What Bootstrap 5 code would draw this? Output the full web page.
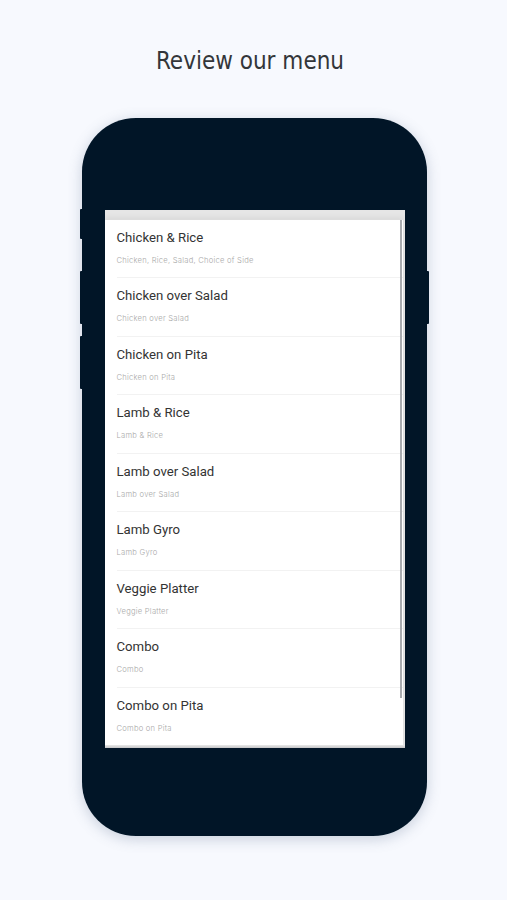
<!DOCTYPE html>
<html lang="en">
<head>
<meta charset="utf-8">
<title>Review our menu</title>
<link rel="stylesheet" href="https://cdn.jsdelivr.net/npm/bootstrap@5.3.0/dist/css/bootstrap.min.css">
<style>
html,body{height:100%}
body{background:#f7f9fe;overflow:hidden;margin:0}
.shot{width:507px;height:900px;padding-top:44px}
.headline{font-family:"DejaVu Sans",sans-serif;font-stretch:condensed;font-size:24px;line-height:34px;color:#33363a;margin:0 0 40px;padding-right:7px;font-weight:400;text-align:center}
.phone{position:relative;width:345px;height:718px;margin-left:82px;background:#011527;border-radius:54px;padding-top:92px;box-shadow:0 3px 14px rgba(90,110,140,.3)}
.side{position:absolute;width:3px;background:#011527;border-radius:1px}
.s1{left:-2px;top:91px;height:30px}
.s2{left:-2px;top:153px;height:53px}
.s3{left:-2px;top:218px;height:53px}
.s4{right:-2px;top:153px;height:53px}
.screen{position:relative;width:300px;height:538px;margin-left:23px;background:#e6e6e6;padding-top:10px;overflow:hidden}
.menu-list{background:#fff;height:526px;margin-right:2px;box-shadow:0 -3px 5px rgba(0,0,0,.05)}
.menu-row{height:58.5px;padding:10px 0 0 0;margin-left:11.5px;border:0;background:transparent;border-radius:0;display:block}
.rule{border-bottom:1px solid #f2f2f2;height:58.5px}
.dish{font-family:Roboto,sans-serif;font-size:13.2px;line-height:16px;color:#333;display:block}
.desc{font-family:Inter,sans-serif;font-size:7.6px;line-height:10px;color:#a8a8a8;display:block;margin-top:10px;letter-spacing:.25px;font-weight:300}
.bar{position:absolute;right:3px;top:10px;width:2px;height:478px;background:#a9abaf}
.base{position:absolute;left:0;right:0;bottom:0;height:3px;background:linear-gradient(#e9e9e9,#c4c4c6)}
</style>
</head>
<body>
<div class="shot">
<h1 class="headline">Review our menu</h1>
<div class="phone">
<span class="side s1"></span><span class="side s2"></span><span class="side s3"></span><span class="side s4"></span>
<div class="screen">
<div class="menu-list list-group list-group-flush">
<div class="list-group-item menu-row rule"><span class="dish">Chicken &amp; Rice</span><span class="desc">Chicken, Rice, Salad, Choice of Side</span></div>
<div class="list-group-item menu-row rule"><span class="dish">Chicken over Salad</span><span class="desc">Chicken over Salad</span></div>
<div class="list-group-item menu-row rule"><span class="dish">Chicken on Pita</span><span class="desc">Chicken on Pita</span></div>
<div class="list-group-item menu-row rule"><span class="dish">Lamb &amp; Rice</span><span class="desc">Lamb &amp; Rice</span></div>
<div class="list-group-item menu-row rule"><span class="dish">Lamb over Salad</span><span class="desc">Lamb over Salad</span></div>
<div class="list-group-item menu-row rule"><span class="dish">Lamb Gyro</span><span class="desc">Lamb Gyro</span></div>
<div class="list-group-item menu-row rule"><span class="dish">Veggie Platter</span><span class="desc">Veggie Platter</span></div>
<div class="list-group-item menu-row rule"><span class="dish">Combo</span><span class="desc">Combo</span></div>
<div class="list-group-item menu-row"><span class="dish">Combo on Pita</span><span class="desc">Combo on Pita</span></div>
</div>
<span class="bar"></span><span class="base"></span>
</div>
</div>
</div>
<script src="https://cdn.jsdelivr.net/npm/bootstrap@5.3.0/dist/js/bootstrap.bundle.min.js"></script>
</body>
</html>
